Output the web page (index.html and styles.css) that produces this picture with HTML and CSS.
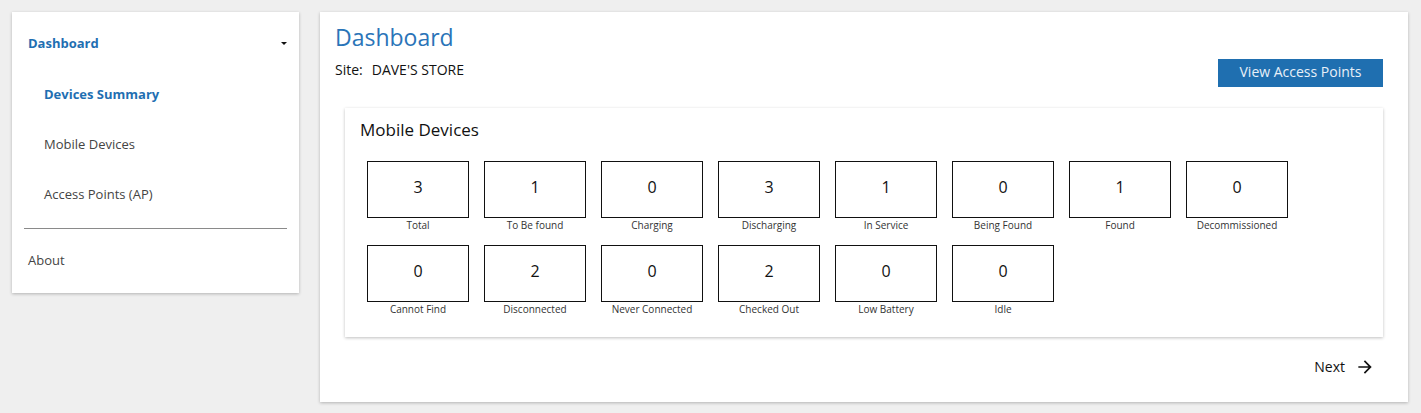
FILE: index.html
```html
<!DOCTYPE html>
<html lang="en">
<head>
<meta charset="utf-8">
<title>Dashboard</title>
<link rel="stylesheet" href="styles.css">
</head>
<body>
<div class="layout">
  <aside class="sidebar">
    <div class="nav-item nav-head">
      <span>Dashboard</span>
      <span class="caret"></span>
    </div>
    <div class="nav-item nav-sub active">Devices Summary</div>
    <div class="nav-item nav-sub">Mobile Devices</div>
    <div class="nav-item nav-sub">Access Points (AP)</div>
    <hr class="divider">
    <div class="nav-item nav-about">About</div>
  </aside>
  <main class="main">
    <h1 class="title">Dashboard</h1>
    <div class="site-row">
      <div class="site"><span class="site-label">Site:</span>DAVE'S STORE</div>
      <button class="btn">View Access Points</button>
    </div>
    <section class="panel">
      <h2 class="panel-title">Mobile Devices</h2>
      <div class="tiles">
        <div class="tile"><div class="box">3</div><div class="label">Total</div></div>
        <div class="tile"><div class="box">1</div><div class="label">To Be found</div></div>
        <div class="tile"><div class="box">0</div><div class="label">Charging</div></div>
        <div class="tile"><div class="box">3</div><div class="label">Discharging</div></div>
        <div class="tile"><div class="box">1</div><div class="label">In Service</div></div>
        <div class="tile"><div class="box">0</div><div class="label">Being Found</div></div>
        <div class="tile"><div class="box">1</div><div class="label">Found</div></div>
        <div class="tile"><div class="box">0</div><div class="label">Decommissioned</div></div>
        <div class="tile"><div class="box">0</div><div class="label">Cannot Find</div></div>
        <div class="tile"><div class="box">2</div><div class="label">Disconnected</div></div>
        <div class="tile"><div class="box">0</div><div class="label">Never Connected</div></div>
        <div class="tile"><div class="box">2</div><div class="label">Checked Out</div></div>
        <div class="tile"><div class="box">0</div><div class="label">Low Battery</div></div>
        <div class="tile"><div class="box">0</div><div class="label">Idle</div></div>
      </div>
    </section>
    <div class="next-row">
      <span class="next">Next
        <svg class="arrow" width="20" height="20" viewBox="0 0 24 24"><path d="M12 4l-1.41 1.41L16.17 11H4v2h12.17l-5.58 5.59L12 20l8-8z" fill="#111"/></svg>
      </span>
    </div>
  </main>
</div>
</body>
</html>
```
FILE: styles.css
```css
* { box-sizing: border-box; }
html, body { margin: 0; padding: 0; }
body {
  background: #efefef;
  font-family: "Open Sans", "Lato", "Liberation Sans", sans-serif;
  color: #222;
}
.layout {
  display: flex;
  align-items: flex-start;
  gap: 21px;
  padding: 12px 13px 12px 12px;
}
.sidebar {
  width: 287px;
  flex: none;
  background: #fff;
  box-shadow: 0 1px 3px rgba(0,0,0,0.25);
  padding: 7px 0 8px;
}
.nav-item {
  height: 50px;
  line-height: 50px;
  font-size: 13px;
  color: #444;
}
.nav-head {
  display: flex;
  justify-content: space-between;
  align-items: center;
  padding: 0 12px 2px 16px;
  line-height: 20px;
  color: #1f6fb2;
  font-weight: 700;
}
.caret {
  width: 0;
  height: 0;
  border-left: 3px solid transparent;
  border-right: 3px solid transparent;
  border-top: 3px solid #111;
  margin-top: 1px;
}
.nav-sub { padding-left: 32px; }
.nav-sub.active { color: #1f6fb2; font-weight: 700; }
.divider {
  border: 0;
  height: 1px;
  background: #8a8a8a;
  margin: 9px 12px 0;
}
.nav-about { padding-left: 16px; margin-top: 6px; }
.main {
  flex: 1;
  background: #fff;
  box-shadow: 0 1px 3px rgba(0,0,0,0.25);
  padding: 10px 25px 22px 15px;
  min-height: 390px;
}
.title {
  margin: 0;
  font-size: 23px;
  line-height: 30px;
  font-weight: 400;
  color: #2a74b8;
}
.site-row {
  display: flex;
  justify-content: space-between;
  align-items: flex-start;
  margin-top: 7px;
}
.site {
  font-size: 14px;
  line-height: 22px;
  color: #111;
}
.site-label { margin-right: 9px; }
.btn {
  height: 28px;
  width: 165px;
  border: 0;
  background: #1f6fb0;
  color: #e8f0f8;
  font-family: inherit;
  font-size: 14px;
  padding: 0 0 3px;
}
.panel {
  margin: 21px 0 0 10px;
  background: #fff;
  box-shadow: 0 1px 3px rgba(0,0,0,0.25);
  padding: 10px 15px 21px;
}
.panel-title {
  margin: 0;
  font-size: 17px;
  line-height: 24px;
  font-weight: 400;
  color: #111;
}
.tiles {
  margin-top: 19px;
  padding-left: 7px;
  display: grid;
  grid-template-columns: repeat(8, 102px);
  column-gap: 15px;
  row-gap: 13px;
}
.tile { display: flex; flex-direction: column; }
.box {
  height: 57px;
  border: 1px solid #111;
  display: flex;
  align-items: center;
  justify-content: center;
  padding-bottom: 6px;
  font-size: 16px;
  color: #111;
}
.label {
  font-size: 10px;
  line-height: 14px;
  text-align: center;
  color: #333;
}
.next-row {
  display: flex;
  justify-content: flex-end;
  margin-top: 20px;
  padding-right: 8px;
}
.next {
  display: flex;
  align-items: center;
  gap: 10px;
  font-size: 14px;
  color: #111;
  line-height: 20px;
}
```
